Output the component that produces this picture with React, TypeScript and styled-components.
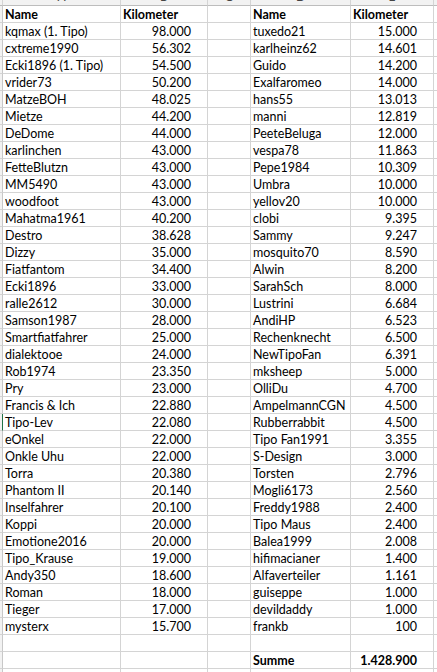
import styled, { createGlobalStyle, css } from 'styled-components'

type Entry = [string, string]

const left: Entry[] = [
  ['kqmax (1. Tipo)', '98.000'],
  ['cxtreme1990', '56.302'],
  ['Ecki1896 (1. Tipo)', '54.500'],
  ['vrider73', '50.200'],
  ['MatzeBOH', '48.025'],
  ['Mietze', '44.200'],
  ['DeDome', '44.000'],
  ['karlinchen', '43.000'],
  ['FetteBlutzn', '43.000'],
  ['MM5490', '43.000'],
  ['woodfoot', '43.000'],
  ['Mahatma1961', '40.200'],
  ['Destro', '38.628'],
  ['Dizzy', '35.000'],
  ['Fiatfantom', '34.400'],
  ['Ecki1896', '33.000'],
  ['ralle2612', '30.000'],
  ['Samson1987', '28.000'],
  ['Smartfiatfahrer', '25.000'],
  ['dialektooe', '24.000'],
  ['Rob1974', '23.350'],
  ['Pry', '23.000'],
  ['Francis & Ich', '22.880'],
  ['Tipo-Lev', '22.080'],
  ['eOnkel', '22.000'],
  ['Onkle Uhu', '22.000'],
  ['Torra', '20.380'],
  ['Phantom II', '20.140'],
  ['Inselfahrer', '20.100'],
  ['Koppi', '20.000'],
  ['Emotione2016', '20.000'],
  ['Tipo_Krause', '19.000'],
  ['Andy350', '18.600'],
  ['Roman', '18.000'],
  ['Tieger', '17.000'],
  ['mysterx', '15.700'],
]

const right: Entry[] = [
  ['tuxedo21', '15.000'],
  ['karlheinz62', '14.601'],
  ['Guido', '14.200'],
  ['Exalfaromeo', '14.000'],
  ['hans55', '13.013'],
  ['manni', '12.819'],
  ['PeeteBeluga', '12.000'],
  ['vespa78', '11.863'],
  ['Pepe1984', '10.309'],
  ['Umbra', '10.000'],
  ['yellov20', '10.000'],
  ['clobi', '9.395'],
  ['Sammy', '9.247'],
  ['mosquito70', '8.590'],
  ['Alwin', '8.200'],
  ['SarahSch', '8.000'],
  ['Lustrini', '6.684'],
  ['AndiHP', '6.523'],
  ['Rechenknecht', '6.500'],
  ['NewTipoFan', '6.391'],
  ['mksheep', '5.000'],
  ['OlliDu', '4.700'],
  ['AmpelmannCGN', '4.500'],
  ['Rubberrabbit', '4.500'],
  ['Tipo Fan1991', '3.355'],
  ['S-Design', '3.000'],
  ['Torsten', '2.796'],
  ['Mogli6173', '2.560'],
  ['Freddy1988', '2.400'],
  ['Tipo Maus', '2.400'],
  ['Balea1999', '2.008'],
  ['hifimacianer', '1.400'],
  ['Alfaverteiler', '1.161'],
  ['guiseppe', '1.000'],
  ['devildaddy', '1.000'],
  ['frankb', '100'],
]

type Row = { l?: Entry; r?: Entry; head?: boolean; active?: boolean }

const rows: Row[] = [
  { head: true },
  ...left.map((l, i) => ({ l, r: right[i], active: l[0] === 'Tipo-Lev' })),
  {},
  { r: ['Summe', '1.428.900'] },
  {},
]

// column letters: only their lower edge shows above the first row
const columns = ['A', 'B', 'C', 'D', 'E', '']

export default function App() {
  return (
    <>
      <GlobalStyle />
      <Sheet>
        <Corner />
        {columns.map((c, i) => (
          <ColHead key={i} aria-hidden>
            <span>{c}</span>
          </ColHead>
        ))}
        {rows.map((row, i) => {
          const summe = row.r?.[0] === 'Summe'
          return [
            <RowHead key={`h${i}`} $active={row.active} />,
            <Cell key={`a${i}`} $bold={row.head}>
              {row.head ? 'Name' : row.l?.[0]}
            </Cell>,
            <Cell key={`b${i}`} $bold={row.head} $num={!row.head}>
              {row.head ? 'Kilometer' : row.l?.[1]}
            </Cell>,
            <Cell key={`c${i}`} />,
            <Cell key={`d${i}`} $bold={row.head || summe}>
              {row.head ? 'Name' : row.r?.[0]}
            </Cell>,
            <Cell key={`e${i}`} $bold={row.head || summe} $num={!row.head}>
              {row.head ? 'Kilometer' : row.r?.[1]}
            </Cell>,
            <Cell key={`f${i}`} />,
          ]
        })}
      </Sheet>
    </>
  )
}

const GlobalStyle = createGlobalStyle`
  html, body {
    margin: 0;
    padding: 0;
    background: #ffffff;
    overflow: hidden;
  }
  body {
    font-family: Lato, "Liberation Sans", sans-serif;
    color: #000000;
  }
`

const Sheet = styled.div`
  display: grid;
  grid-template-columns: 3px 118px 87px 43px 100px 83px 1fr;
  grid-auto-rows: 17px;
  grid-template-rows: 6px;
  width: 437px;
  height: 672px;
  overflow: hidden;
`

const Corner = styled.div`
  background: #f2f2f2;
  border-right: 1px solid #d4d4d4;
  border-bottom: 1px solid #bdbdbd;
`

const ColHead = styled.div`
  background: #f2f2f2;
  border-right: 1px solid #d4d4d4;
  border-bottom: 1px solid #bdbdbd;
  overflow: hidden;
  text-align: center;

  span {
    display: block;
    margin-top: -9px;
    font-size: 12px;
    line-height: 12px;
    color: #444444;
  }
`

const RowHead = styled.div<{ $active?: boolean }>`
  background: #f2f2f2;
  border-right: 1px solid #c8c8c8;
  border-bottom: 1px solid #d4d4d4;

  ${p =>
    p.$active &&
    css`
      border-right: 1px solid #217346;
    `}
`

const Cell = styled.div<{ $bold?: boolean; $num?: boolean }>`
  border-right: 1px solid #d4d4d4;
  border-bottom: 1px solid #d4d4d4;
  font-size: 12.5px;
  line-height: 17px;
  padding: 0 2px;
  white-space: nowrap;
  overflow: hidden;
  font-weight: ${p => (p.$bold ? 700 : 400)};

  ${p =>
    p.$num &&
    css`
      text-align: right;
      padding-right: 16px;
    `}
`
